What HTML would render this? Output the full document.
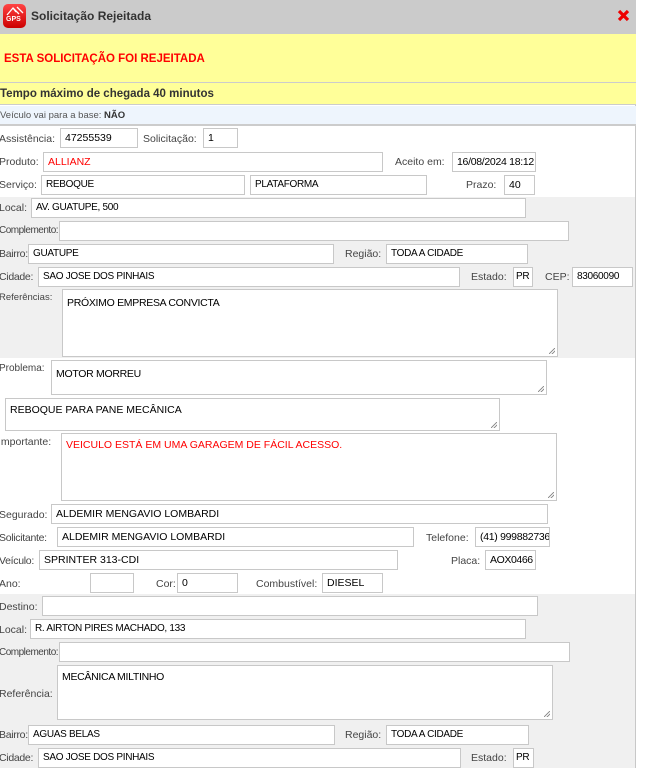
<!DOCTYPE html>
<html><head><meta charset="utf-8"><style>
*{box-sizing:border-box;margin:0;padding:0}
body{width:655px;height:778px;background:#fff;font-family:"Liberation Sans","DejaVu Sans",sans-serif;font-size:11px;color:#444;position:relative;overflow:hidden}
.a{position:absolute}
.i{position:absolute;border:1px solid #c8c8c8;background:#fff;height:20px;padding:3px 0 0 4px;color:#000;font-size:10.5px;white-space:nowrap;overflow:hidden}
.n{font-size:10px;letter-spacing:-0.3px}
.t{position:absolute;border:1px solid #c8c8c8;background:#fff;padding:7px 0 0 4px;color:#000;font-size:10.5px}
.t::after{content:"";position:absolute;right:2px;bottom:2px;width:6px;height:6px;background:linear-gradient(135deg,transparent 45%,#888 46%,#888 54%,transparent 55%,transparent 70%,#888 71%,#888 79%,transparent 80%)}
.l{position:absolute;white-space:nowrap;font-size:10.5px}
.c{letter-spacing:-0.5px;font-size:10px}
.d{letter-spacing:-0.3px;font-size:10.5px}
</style></head><body>
<div class="a" style="left:0;top:0;width:636px;height:768px;border-right:1px solid #c8c8c8;border-bottom:1px solid #c8c8c8"></div>
<div class="a" style="left:0;top:0;width:636px;height:34px;background:#cbcbcb"></div>
<div class="a" style="left:3px;top:4px;width:23px;height:24px;border-radius:5px;background:linear-gradient(#f44,#c00);"></div>
<div class="a" style="left:6px;top:16px;color:#fff;font-size:7px;font-weight:bold">GPS</div>
<svg class="a" style="left:5px;top:5px" width="20" height="11"><path d="M2 10 L8 3 L11 7 M8 3 L14 9 M12 2 L18 8" stroke="#fff" stroke-width="1.3" fill="none"/></svg>
<div class="l" style="left:31px;top:9px;font-size:12px;font-weight:bold;color:#333">Solicitação Rejeitada</div>
<svg class="a" style="left:617px;top:9px" width="13" height="13"><path d="M2 2L11 11M11 2L2 11" stroke="#e00" stroke-width="3.2"/></svg>
<div class="a" style="left:0;top:34px;width:636px;height:49px;background:#ffff99;border-bottom:1px solid #ccc"></div>
<div class="l" style="left:4px;top:53px;font-size:11.5px;font-weight:bold;color:#f00">ESTA SOLICITAÇÃO FOI REJEITADA</div>
<div class="a" style="left:0;top:83px;width:636px;height:22px;background:#ffff99;border-bottom:1px solid #ccc"></div>
<div class="l" style="left:0;top:88px;font-size:11.5px;font-weight:bold;color:#333">Tempo máximo de chegada 40 minutos</div>
<div class="a" style="left:0;top:106px;width:636px;height:20px;background:#eef5fd;border-bottom:2px solid #ccc"></div>
<div class="l" style="left:0;top:110px;font-size:9.5px;color:#555">Veículo vai para a base: <b style="color:#333">NÃO</b></div>
<div class="a" style="left:0;top:197px;width:635px;height:161px;background:#f0f0f0"></div>
<div class="a" style="left:0;top:594px;width:635px;height:174px;background:#f0f0f0"></div>

<div class="l" style="left:-1px;top:133px">Assistência:</div><div class="i" style="left:60px;top:128px;width:78px">47255539</div>
<div class="l" style="left:143px;top:133px">Solicitação:</div><div class="i" style="left:203px;top:128px;width:35px">1</div>
<div class="l" style="left:-1px;top:156px">Produto:</div><div class="i" style="left:43px;top:152px;width:340px;color:#f00">ALLIANZ</div>
<div class="l" style="left:395px;top:156px">Aceito em:</div><div class="i" style="left:452px;top:152px;width:84px;letter-spacing:-0.3px">16/08/2024 18:12</div>
<div class="l" style="left:-1px;top:179px">Serviço:</div><div class="i n" style="left:41px;top:175px;width:204px">REBOQUE</div>
<div class="i n" style="left:250px;top:175px;width:177px">PLATAFORMA</div>
<div class="l" style="left:466px;top:179px">Prazo:</div><div class="i" style="left:504px;top:175px;width:31px">40</div>

<div class="l" style="left:-1px;top:202px">Local:</div><div class="i n" style="left:31px;top:198px;width:495px">AV. GUATUPE, 500</div>
<div class="l c" style="left:-1px;top:225px">Complemento:</div><div class="i" style="left:59px;top:221px;width:510px"></div>
<div class="l d" style="left:-1px;top:248px">Bairro:</div><div class="i n" style="left:28px;top:244px;width:306px">GUATUPE</div>
<div class="l" style="left:345px;top:248px">Região:</div><div class="i n" style="left:386px;top:244px;width:142px">TODA A CIDADE</div>
<div class="l d" style="left:-1px;top:271px">Cidade:</div><div class="i n" style="left:38px;top:267px;width:422px">SAO JOSE DOS PINHAIS</div>
<div class="l" style="left:471px;top:271px">Estado:</div><div class="i n" style="left:513px;top:267px;width:20px;padding-left:2px">PR</div>
<div class="l" style="left:545px;top:271px">CEP:</div><div class="i n" style="left:572px;top:267px;width:61px">83060090</div>
<div class="l" style="left:-1px;top:292px;font-size:9.5px">Referências:</div><div class="t n" style="left:62px;top:289px;width:496px;height:68px">PRÓXIMO EMPRESA CONVICTA</div>

<div class="l" style="left:-1px;top:363px;font-size:10px">Problema:</div><div class="t n" style="left:51px;top:360px;width:496px;height:35px">MOTOR MORREU</div>
<div class="t" style="left:5px;top:398px;width:495px;height:33px;padding-top:5px">REBOQUE PARA PANE MECÂNICA</div>
<div class="l" style="left:-2px;top:436px">Importante:</div><div class="t" style="left:61px;top:433px;width:496px;height:68px;color:#f00;padding-top:5px">VEICULO ESTÁ EM UMA GARAGEM DE FÁCIL ACESSO.</div>
<div class="l" style="left:-1px;top:509px">Segurado:</div><div class="i" style="left:51px;top:504px;width:497px">ALDEMIR MENGAVIO LOMBARDI</div>
<div class="l d" style="left:-1px;top:532px">Solicitante:</div><div class="i" style="left:57px;top:527px;width:357px">ALDEMIR MENGAVIO LOMBARDI</div>
<div class="l" style="left:426px;top:532px">Telefone:</div><div class="i" style="left:475px;top:527px;width:75px;letter-spacing:-0.3px">(41) 999882736</div>
<div class="l d" style="left:-1px;top:555px">Veículo:</div><div class="i" style="left:39px;top:550px;width:359px">SPRINTER 313-CDI</div>
<div class="l" style="left:451px;top:555px">Placa:</div><div class="i" style="left:485px;top:550px;width:51px;letter-spacing:-0.4px">AOX0466</div>
<div class="l" style="left:-1px;top:578px">Ano:</div><div class="i" style="left:90px;top:573px;width:44px"></div>
<div class="l" style="left:156px;top:578px">Cor:</div><div class="i" style="left:177px;top:573px;width:61px">0</div>
<div class="l" style="left:256px;top:578px">Combustível:</div><div class="i" style="left:322px;top:573px;width:61px">DIESEL</div>

<div class="l" style="left:-1px;top:601px">Destino:</div><div class="i" style="left:42px;top:596px;width:496px"></div>
<div class="l" style="left:-1px;top:624px">Local:</div><div class="i n" style="left:30px;top:619px;width:496px">R. AIRTON PIRES MACHADO, 133</div>
<div class="l c" style="left:-1px;top:647px">Complemento:</div><div class="i" style="left:59px;top:642px;width:511px"></div>
<div class="l" style="left:-1px;top:688px">Referência:</div><div class="t n" style="left:57px;top:665px;width:496px;height:55px;padding-top:5px">MECÂNICA MILTINHO</div>
<div class="l d" style="left:-1px;top:729px">Bairro:</div><div class="i n" style="left:28px;top:725px;width:307px">AGUAS BELAS</div>
<div class="l" style="left:345px;top:729px">Região:</div><div class="i n" style="left:386px;top:725px;width:143px">TODA A CIDADE</div>
<div class="l d" style="left:-1px;top:752px">Cidade:</div><div class="i n" style="left:38px;top:748px;width:423px">SAO JOSE DOS PINHAIS</div>
<div class="l" style="left:471px;top:752px">Estado:</div><div class="i n" style="left:513px;top:748px;width:21px;padding-left:2px">PR</div>
</body></html>
